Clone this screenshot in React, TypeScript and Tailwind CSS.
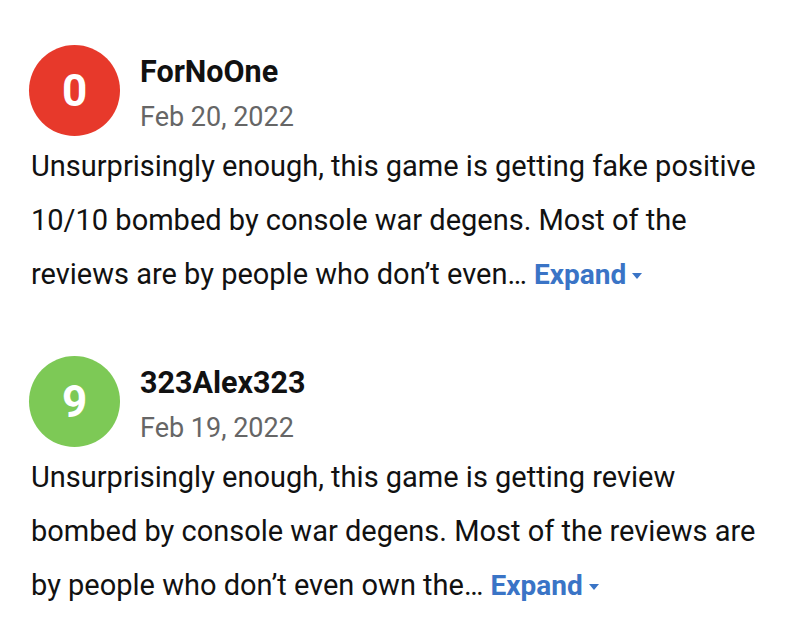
const reviews = [
  {
    score: "0",
    color: "bg-[#e7392b]",
    name: "ForNoOne",
    date: "Feb 20, 2022",
    text: "Unsurprisingly enough, this game is getting fake positive 10/10 bombed by console war degens. Most of the reviews are by people who don\u2019t even\u2026",
  },
  {
    score: "9",
    color: "bg-[#7dc956]",
    name: "323Alex323",
    date: "Feb 19, 2022",
    text: "Unsurprisingly enough, this game is getting review bombed by console war degens. Most of the reviews are by people who don\u2019t even own the\u2026",
  },
];

const Review = ({ r }: { r: (typeof reviews)[number] }) => (
  <div className="flex flex-col">
    <div className="flex items-start gap-[20px] -ml-[2px]">
      <div
        className={`${r.color} w-[91px] h-[91px] rounded-full flex items-center justify-center text-white font-bold text-[44px] shrink-0`}
      >
        {r.score}
      </div>
      <div className="flex flex-col gap-[13px] pt-[11px]">
        <div className="font-bold text-[30.5px] leading-[32px] text-[#111]">{r.name}</div>
        <div className="text-[27px] leading-[32px] text-[#666]">{r.date}</div>
      </div>
    </div>
    <p className="mt-[3px] text-[29px] leading-[54px] text-[#111]">
      {r.text}{" "}
      <span className="font-bold text-[28px] text-[#3a74c6] whitespace-nowrap">
        Expand
        <svg className="inline-block ml-[6px] align-middle" width="10" height="7" viewBox="0 0 10 7">
          <path d="M0 0h10L5 6z" fill="#3a74c6" />
        </svg>
      </span>
    </p>
  </div>
);

export default function App() {
  return (
    <div
      className="w-[800px] h-[627px] bg-white pl-[31px] pr-[20px] pt-[45px] flex flex-col gap-[54px]"
      style={{ fontFamily: "Roboto, sans-serif" }}
    >
      {reviews.map((r) => (
        <Review key={r.name} r={r} />
      ))}
    </div>
  );
}
